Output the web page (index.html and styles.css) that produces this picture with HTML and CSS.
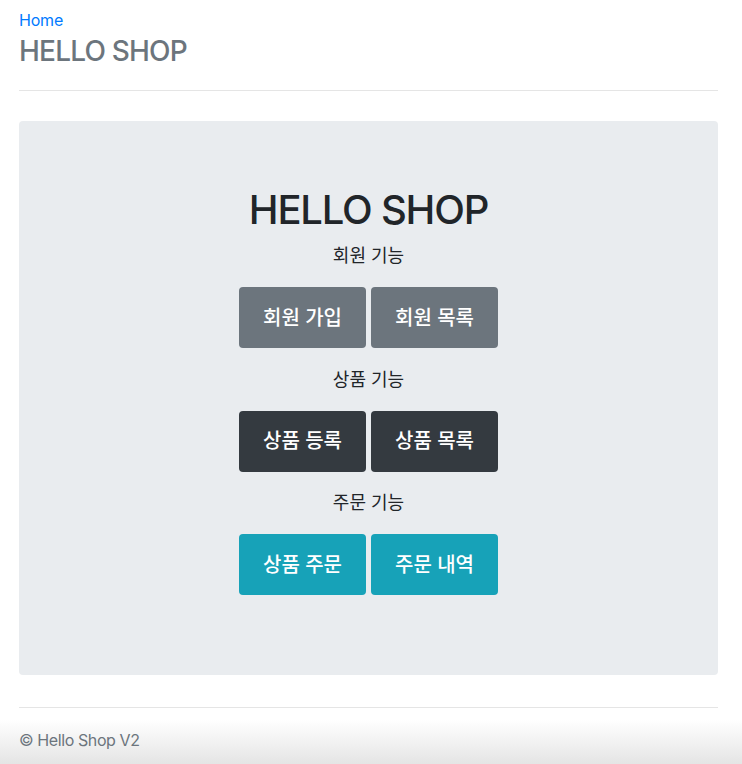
FILE: index.html
```html
<!DOCTYPE html>
<html lang="ko">
<head>
<meta charset="utf-8">
<title>HELLO SHOP</title>
<link rel="stylesheet" href="styles.css">
</head>
<body>
<div class="container">
  <header class="header">
    <a class="home-link" href="#">Home</a>
    <h3 class="brand">HELLO SHOP</h3>
  </header>
  <hr class="rule">
  <main class="jumbotron">
    <h1 class="title">HELLO SHOP</h1>
    <p class="lead">회원 기능</p>
    <div class="btn-row">
      <a class="btn btn-secondary" href="#">회원 가입</a>
      <a class="btn btn-secondary" href="#">회원 목록</a>
    </div>
    <p class="lead">상품 기능</p>
    <div class="btn-row">
      <a class="btn btn-dark" href="#">상품 등록</a>
      <a class="btn btn-dark" href="#">상품 목록</a>
    </div>
    <p class="lead">주문 기능</p>
    <div class="btn-row">
      <a class="btn btn-info" href="#">상품 주문</a>
      <a class="btn btn-info" href="#">주문 내역</a>
    </div>
  </main>
  <hr class="rule footer-rule">
</div>
<footer class="footer">
  <p class="copy">© Hello Shop V2</p>
</footer>
</body>
</html>
```

FILE: styles.css
```css
* { box-sizing: border-box; }
html, body { margin: 0; padding: 0; }
body {
  font-family: Inter, "Noto Sans CJK KR", sans-serif;
  color: #212529;
  background: #fff;
  font-size: 16px;
  line-height: 1.5;
}
.container {
  padding: 8px 24px 0 19px;
}
.header {
  display: flex;
  flex-direction: column;
}
.home-link {
  color: #007bff;
  text-decoration: none;
  font-size: 16px;
  line-height: 24px;
  align-self: flex-start;
  letter-spacing: -0.2px;
}
.brand {
  margin: 2px 0 0;
  font-size: 28px;
  font-weight: 500;
  line-height: 34px;
  color: #6c757d;
  letter-spacing: -0.8px;
}
.rule {
  margin: 22px 0 0;
  border: 0;
  border-top: 1px solid rgba(0,0,0,0.1);
}
.jumbotron {
  margin-top: 30px;
  background: #e9ecef;
  border-radius: 4px;
  padding: 65px 16px 80px;
  display: flex;
  flex-direction: column;
  align-items: center;
}
.title {
  margin: 0 0 8px;
  font-size: 40px;
  font-weight: 500;
  line-height: 48px;
  color: #212529;
  letter-spacing: -1.2px;
}
.lead {
  margin: 0 0 18px;
  font-size: 18px;
  line-height: 27px;
  color: #212529;
}
.btn-row {
  display: flex;
  gap: 5px;
  margin-bottom: 17.5px;
}
.btn-row:last-child { margin-bottom: 0; }
.btn {
  width: 127px;
  height: 61px;
  display: flex;
  align-items: center;
  justify-content: center;
  border-radius: 4px;
  color: #fff;
  font-size: 20px;
  font-weight: 500;
  text-decoration: none;
}
.btn-secondary { background: #6c757d; }
.btn-dark { background: #343a40; }
.btn-info { background: #17a2b8; }
.footer-rule { margin-top: 32px; }
.footer {
  padding: 20px 19px 12px;
  background: linear-gradient(to bottom, #ffffff 0%, #ffffff 20%, #e4e4e4 100%);
  height: 57px;
}
.copy {
  margin: 0;
  font-size: 16px;
  line-height: 24px;
  color: #6c757d;
  letter-spacing: -0.4px;
}
```
